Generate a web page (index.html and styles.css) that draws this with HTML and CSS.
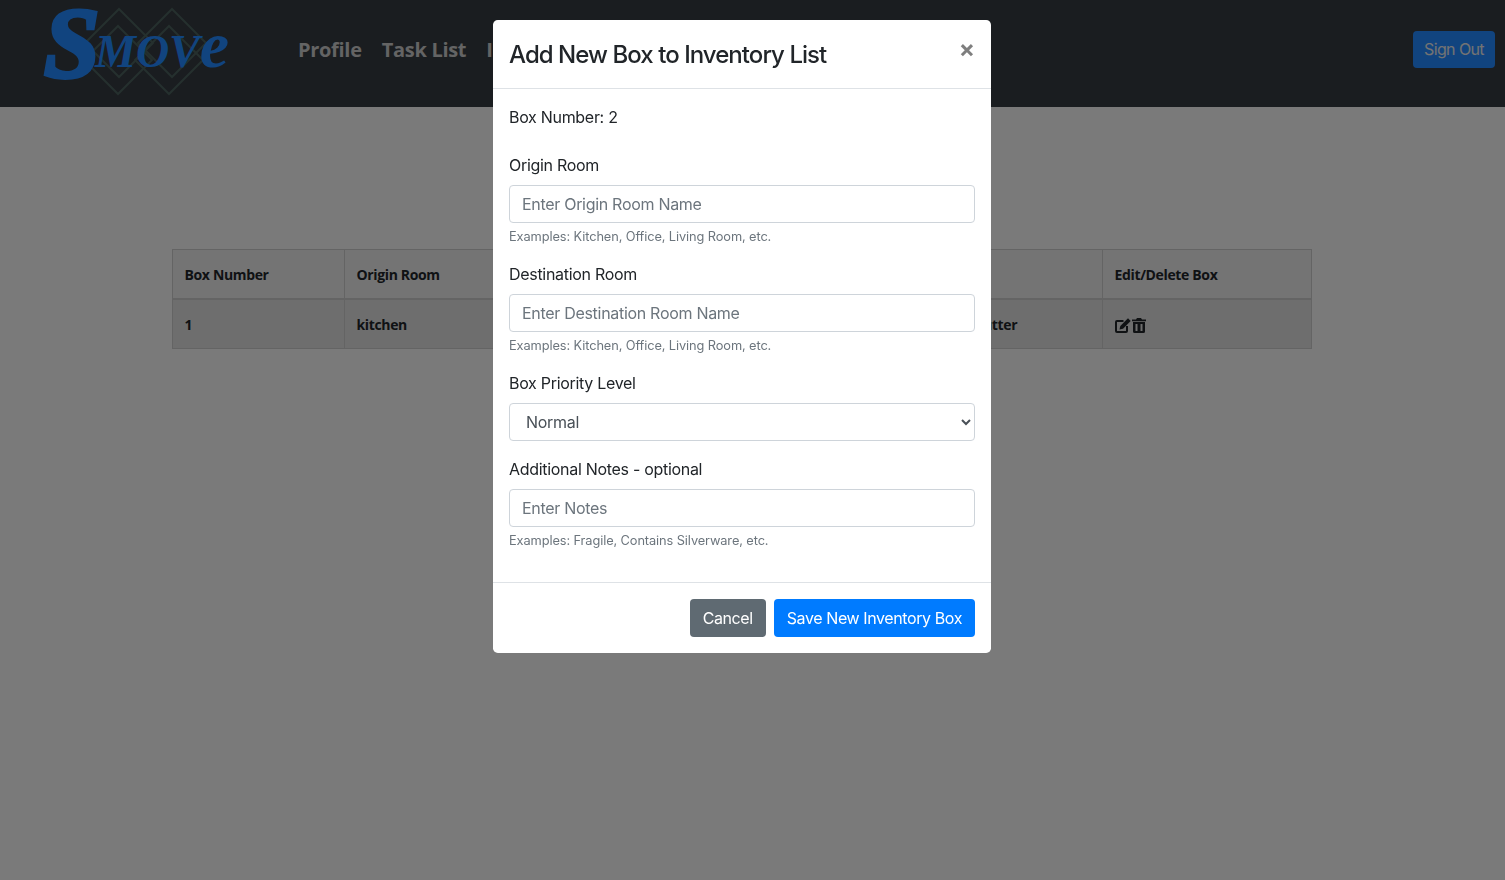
FILE: index.html
```html
<!DOCTYPE html>
<html lang="en">
<head>
  <meta charset="UTF-8" />
  <meta name="viewport" content="width=device-width, initial-scale=1.0"/>
  <title>Smove</title>
  <link rel="stylesheet" href="styles.css">
</head>
<body>
  <header class="navbar">
    <svg class="logo" width="195" height="100" viewBox="40 0 195 100">
      <g class="logo-lines">
        <path d="M119 9 153 43 119 77 85 43Z"/>
        <path d="M172 9 206 43 172 77 138 43Z"/>
        <path d="M118 26 152 60 118 94 84 60Z"/>
        <path d="M169 26 203 60 169 94 135 60Z"/>
      </g>
      <text class="logo-s" x="44" y="76">S</text>
      <text class="logo-rest" x="95" y="67">MOV<tspan class="logo-e">e</tspan></text>
    </svg>
    <nav class="nav-links">
      <a href="#">Profile</a>
      <a href="#">Task List</a>
      <a href="#">Inventory</a>
    </nav>
    <button class="sign-out">Sign Out</button>
  </header>

  <main class="content">
    <table class="box-table">
      <colgroup>
        <col class="col-a"><col class="col-b"><col class="col-c"><col class="col-d"><col class="col-e"><col class="col-f">
      </colgroup>
      <thead>
        <tr>
          <th>Box Number</th>
          <th>Origin Room</th>
          <th>Destination Room</th>
          <th>Priority</th>
          <th>Notes</th>
          <th>Edit/Delete Box</th>
        </tr>
      </thead>
      <tbody>
        <tr>
          <td>1</td>
          <td>kitchen</td>
          <td>office</td>
          <td>Normal</td>
          <td>kitchen clutter</td>
          <td>
            <span class="row-icons">
              <svg width="16" height="15" viewBox="0 0 16 15">
                <path class="ic-line" d="M8.500 3H2a1 1 0 0 0-1 1v9a1 1 0 0 0 1 1h9a1 1 0 0 0 1-1V8"/>
                <path d="M13 .3 15.700 3 8 10.700l-3.500.8.800-3.500Z"/>
              </svg>
              <svg width="14" height="15" viewBox="0 0 14 15">
                <path d="M5 0h4l1 1.500h4v1.800H0V1.500h4Z"/>
                <path fill-rule="evenodd" d="M1 4h12v9.500a1.500 1.500 0 0 1-1.500 1.500h-9A1.500 1.500 0 0 1 1 13.500ZM3.500 6v7h2V6ZM8.500 6v7h2V6Z"/>
              </svg>
            </span>
          </td>
        </tr>
      </tbody>
    </table>
  </main>

  <div class="backdrop"></div>

  <div class="modal">
    <div class="modal-header">
      <h2>Add New Box to Inventory List</h2>
      <button class="close">&times;</button>
    </div>
    <form class="modal-body">
      <p class="box-number">Box Number: 2</p>
      <div class="form-group">
        <label for="origin">Origin Room</label>
        <input type="text" id="origin" placeholder="Enter Origin Room Name" />
        <small>Examples: Kitchen, Office, Living Room, etc.</small>
      </div>
      <div class="form-group">
        <label for="destination">Destination Room</label>
        <input type="text" id="destination" placeholder="Enter Destination Room Name" />
        <small>Examples: Kitchen, Office, Living Room, etc.</small>
      </div>
      <div class="form-group">
        <label for="priority">Box Priority Level</label>
        <select id="priority">
          <option>Normal</option>
          <option>High</option>
          <option>Low</option>
        </select>
      </div>
      <div class="form-group">
        <label for="notes">Additional Notes - optional</label>
        <input type="text" id="notes" placeholder="Enter Notes" />
        <small>Examples: Fragile, Contains Silverware, etc.</small>
      </div>
    </form>
    <div class="modal-footer">
      <button class="btn btn-grey">Cancel</button>
      <button class="btn btn-blue">Save New Inventory Box</button>
    </div>
  </div>
</body>
</html>
```

FILE: styles.css
```css
* {
  box-sizing: border-box;
}
body {
  margin: 0;
  min-height: 880px;
  background: #f5f5f5;
  color: #212529;
  font-family: "Inter", "Liberation Sans", sans-serif;
  font-size: 16px;
  line-height: 1.5;
  letter-spacing: -0.3px;
  overflow: hidden;
}

/* navbar */
.navbar {
  display: flex;
  align-items: center;
  height: 107px;
  padding: 0 10px 0 40px;
  background: #343a40;
}
.logo {
  display: block;
  flex-shrink: 0;
  margin-bottom: 7px;
}
.logo-lines path {
  fill: none;
  stroke: #4a605c;
  stroke-width: 2;
}
.logo-s, .logo-rest {
  fill: #2389ff;
  font-family: "Liberation Serif", serif;
  font-style: italic;
  font-weight: bold;
  letter-spacing: 0;
}
.logo-s {
  font-size: 100px;
  stroke: #2389ff;
  stroke-width: 4;
}
.logo-rest {
  font-size: 46px;
}
.logo-e {
  font-size: 66px;
}
.nav-links {
  display: flex;
  gap: 20px;
  margin-left: 63px;
  margin-bottom: 7px;
  flex: 1;
}
.nav-links a {
  color: #c8c8c8;
  font-family: "Open Sans", sans-serif;
  font-size: 20px;
  font-weight: 700;
  letter-spacing: -0.3px;
  text-decoration: none;
}
.sign-out {
  width: 82px;
  height: 37px;
  margin-bottom: 9px;
  padding: 0;
  border: 0;
  border-radius: 4px;
  background: #2389ff;
  color: #e6e6e6;
  font-family: "Inter", sans-serif;
  font-size: 16px;
  letter-spacing: -0.6px;
}

/* table under the modal */
.content {
  padding: 142px 0 0 172px;
}
.box-table {
  width: 1139px;
  border-collapse: collapse;
  table-layout: fixed;
  font-family: "Open Sans", sans-serif;
  font-size: 14px;
  font-weight: 700;
  letter-spacing: -0.35px;
}
.col-a { width: 172px; }
.col-b { width: 172px; }
.col-c { width: 200px; }
.col-d { width: 190px; }
.col-e { width: 196px; }
.col-f { width: 209px; }
.box-table th, .box-table td {
  height: 49.500px;
  padding: 0 11px 0 11.500px;
  border: 1px solid #c8c8c8;
  text-align: left;
  vertical-align: middle;
}
.box-table th {
  border-bottom-width: 2px;
  background: #e8e8e8;
}
.box-table tbody tr {
  background: #dcdcdc;
}
.row-icons {
  display: flex;
  gap: 1px;
  margin-top: 2px;
}
.row-icons svg {
  fill: #212529;
}
.row-icons .ic-line {
  fill: none;
  stroke: #212529;
  stroke-width: 2;
}

/* modal */
.backdrop {
  position: fixed;
  inset: 0;
  background: rgba(0, 0, 0, 0.5);
}
.modal {
  position: fixed;
  top: 20px;
  left: 493px;
  width: 498px;
  background: #fff;
  border-radius: 4.800px;
}
.modal-header {
  display: flex;
  justify-content: space-between;
  height: 69px;
  padding: 17px 16px 0;
  border-bottom: 1px solid #dee2e6;
}
.modal-header h2 {
  margin: 0;
  font-size: 24px;
  font-weight: 500;
  line-height: 36px;
  letter-spacing: -0.95px;
}
.close {
  height: 30px;
  margin-top: -3px;
  padding: 0;
  border: 0;
  background: none;
  color: #000;
  opacity: 0.5;
  font-family: "Inter", sans-serif;
  font-size: 24px;
  font-weight: 700;
  line-height: 1;
}
.modal-body {
  padding: 16px 16px 15px;
}
.box-number {
  margin: 0 0 24px;
}
.form-group {
  margin-bottom: 16px;
}
.form-group label {
  display: block;
  margin-bottom: 8px;
}
.form-group input, .form-group select {
  display: block;
  width: 100%;
  height: 38px;
  padding: 6px 12px;
  border: 1px solid #ced4da;
  border-radius: 4px;
  background: #fff;
  color: #495057;
  font-family: inherit;
  font-size: 16px;
  letter-spacing: -0.3px;
}
.form-group input::placeholder {
  color: #6c757d;
}
.form-group small {
  display: block;
  margin-top: 4px;
  color: #6c757d;
  font-size: 12.800px;
  line-height: 19.200px;
  letter-spacing: -0.1px;
}
.modal-footer {
  display: flex;
  justify-content: flex-end;
  gap: 8px;
  padding: 16px;
  border-top: 1px solid #dee2e6;
}
.btn {
  height: 38px;
  padding: 0 13px;
  border: 0;
  border-radius: 4px;
  color: #fff;
  font-family: inherit;
  font-size: 16px;
  letter-spacing: -0.4px;
}
.btn-grey {
  background: #5f6a72;
}
.btn-blue {
  background: #007bff;
}
```
